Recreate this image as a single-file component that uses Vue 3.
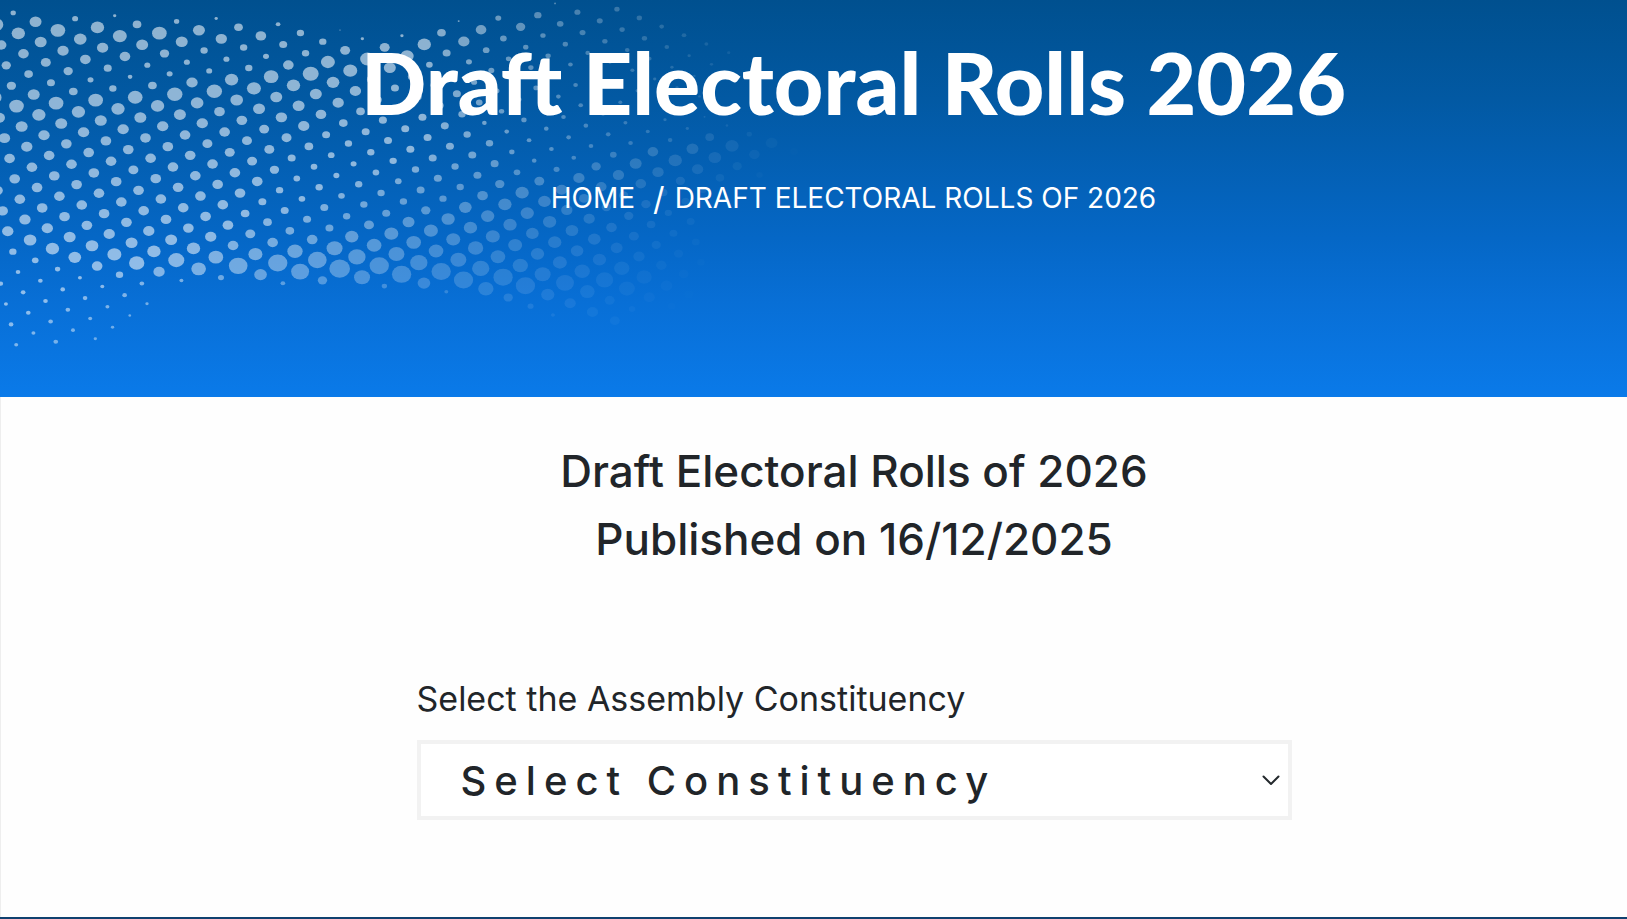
<script setup>
import { ref } from 'vue'

const constituency = ref('')

// Each entry: [row index, first column index, dot radii along the row]
const rows = [
  [-14, 30, [8, 8, 7, 7, 6, 5]],
  [-13, 27, [3, 9, 9, 8, 8, 7, 5, 5]],
  [-12, 26, [11, 10, 9, 8, 7, 6, 5, 4]],
  [-11, 24, [9, 14, 8, 8, 7, 7, 6, 5, 5, 4]],
  [-10, 22, [3, 16, 10, 8, 8, 7, 7, 7, 6, 4, 4, 3, 4, 8, 18, 12]],
  [-9, 21, [13, 17, 10, 8, 8, 7, 7, 6, 6, 6, 5, 5, 13, 20, 16]],
  [-8, 19, [5, 20, 12, 9, 9, 9, 8, 7, 7, 6, 6, 6, 7, 18, 19, 14, 10]],
  [-7, 16, [2, 5, 15, 20, 10, 9, 9, 9, 8, 7, 7, 7, 7, 7, 16, 20, 17, 13]],
  [-6, 13, [7, 11, 11, 15, 22, 18, 13, 12, 12, 10, 8, 8, 7, 7, 7, 10, 18, 17, 14, 12]],
  [-5, 10, [5, 13, 16, 12, 11, 21, 21, 17, 12, 13, 12, 11, 7, 7, 7, 7, 7, 14, 17, 16, 13, 12]],
  [-4, 8, [8, 18, 17, 11, 9, 16, 24, 19, 17, 12, 13, 12, 12, 11, 11, 8, 7, 9, 17, 16, 14, 14, 11, 12]],
  [-3, 5, [5, 13, 22, 18, 11, 9, 11, 22, 20, 18, 17, 13, 12, 12, 12, 12, 12, 12, 10, 15, 17, 15, 14, 14, 13, 12, 12]],
  [-2, 3, [9, 20, 21, 18, 14, 9, 9, 20, 21, 18, 18, 16, 13, 12, 12, 12, 12, 11, 12, 14, 20, 19, 17, 17, 16, 15, 14, 14, 12]],
  [-1, 0, [8, 18, 22, 19, 17, 16, 9, 9, 17, 23, 19, 18, 17, 17, 12, 11, 11, 11, 11, 12, 11, 16, 20, 20, 20, 19, 19, 18, 17, 16, 15]],
  [0, -1, [22, 20, 18, 17, 16, 12, 7, 13, 23, 19, 16, 16, 15, 15, 13, 10, 9, 10, 10, 12, 11, 19, 20, 20, 19, 20, 19, 20, 23, 23, 18, 15, 12]],
  [1, -1, [16, 16, 15, 14, 9, 11, 22, 20, 18, 17, 16, 15, 15, 12, 10, 9, 11, 11, 11, 14, 20, 20, 21, 21, 20, 21, 23, 26, 24, 17, 12]],
  [2, -1, [14, 13, 12, 13, 22, 20, 18, 17, 16, 15, 15, 15, 14, 10, 11, 10, 11, 12, 18, 21, 21, 23, 22, 23, 24, 27, 22, 15, 10]],
  [3, -1, [14, 18, 22, 20, 18, 17, 16, 16, 16, 16, 16, 16, 11, 10, 12, 11, 15, 21, 22, 22, 24, 26, 29, 29, 20, 17, 17, 15]],
  [4, -2, [22, 22, 20, 18, 17, 16, 16, 16, 16, 16, 16, 16, 12, 12, 12, 12, 20, 22, 24, 26, 29, 29, 23, 14, 9, 6]],
  [5, -2, [17, 18, 17, 16, 16, 16, 15, 16, 16, 16, 16, 13, 13, 13, 16, 24, 26, 29, 29, 19, 6]],
  [6, -2, [17, 17, 16, 16, 16, 16, 16, 16, 16, 16, 16, 15, 16, 23, 28, 31, 24, 8]],
  [7, -2, [16, 16, 16, 16, 16, 16, 16, 16, 16, 17, 16, 21, 29, 27, 14]],
  [8, -2, [16, 16, 16, 16, 16, 16, 17, 18, 20, 22, 28, 19, 7]],
  [9, -3, [16, 16, 16, 16, 16, 17, 18, 20, 24, 22, 9]],
  [10, -3, [16, 17, 17, 18, 19, 21, 23, 17, 6]],
  [11, -3, [17, 19, 20, 19, 16, 11, 7]],
  [12, -3, [11, 10, 8, 6, 6, 7, 5]],
  [13, -3, [7, 7, 7, 7, 6, 4]],
  [14, -4, [7, 7, 7, 7, 6, 5]],
  [15, -4, [6, 7, 7, 6, 5]],
  [16, -4, [7, 6, 7]],
  [17, -4, [6]],
]

// The wave of dots fades towards the right, earlier in its lower part
function fade(x, y) {
  const low = Math.max(0, y - 450)
  const start = 1260 - low * 2.5
  const end = 2440 - low * 0.7
  const t = Math.min(1, Math.max(0, (end - x) / (end - start)))
  return 0.58 * Math.pow(t, 1.3)
}

const dots = rows.flatMap(([j, first, radii]) =>
  radii.map((r, k) => {
    const i = first + k
    const x = 55 + 67.05 * i + 15.4 * j
    const y = 100 + 26.1 * i + 61.1 * j
    return { key: `${i},${j}`, x, y, rx: r, ry: r * 0.88, o: fade(x, y) }
  })
)
</script>

<template>
  <div class="page">
    <header class="banner">
      <svg class="dots" viewBox="0 0 2520 1191" aria-hidden="true">
        <ellipse
          v-for="d in dots"
          :key="d.key"
          :cx="d.x"
          :cy="d.y"
          :rx="d.rx"
          :ry="d.ry"
          :fill-opacity="d.o"
          fill="#f4f8fb"
        />
      </svg>
      <h1 class="title">Draft Electoral Rolls 2026</h1>
      <nav class="crumbs" aria-label="Breadcrumb">
        <a href="#">HOME</a>
        <span class="slash">/</span>
        <span>DRAFT ELECTORAL ROLLS OF 2026</span>
      </nav>
    </header>

    <main class="content">
      <h2 class="heading">Draft Electoral Rolls of 2026<br />Published on 16/12/2025</h2>
      <form class="form">
        <label class="label" for="constituency">Select the Assembly Constituency</label>
        <div class="field">
          <select id="constituency" v-model="constituency" class="select">
            <option value="">Select Constituency</option>
          </select>
          <svg class="chevron" viewBox="0 0 18 11" aria-hidden="true">
            <path d="M1.500 1.500 9 9l7.500-7.500" fill="none" stroke="#24292d" stroke-width="2" stroke-linecap="round" stroke-linejoin="round" />
          </svg>
        </div>
      </form>
    </main>

    <footer class="footer"></footer>
  </div>
</template>

<style>
body {
  background: #fefefe;
}
</style>

<style scoped>
.page {
  display: flex;
  flex-direction: column;
  min-height: 100vh;
  color: #212529;
  font-family: Inter, "Liberation Sans", sans-serif;
}

.banner {
  position: relative;
  overflow: hidden;
  box-sizing: border-box;
  padding: 34px 0 178px 80px;
  background: linear-gradient(#00508f 0%, #0259a3 25%, #0567c6 60%, #086fd6 76%, #0a7ae9 100%);
  color: #fff;
  text-align: center;
}

.dots {
  position: absolute;
  top: 0;
  left: 0;
  width: 840px;
  height: 397px;
}

.title {
  position: relative;
  margin: 0;
  font-family: Lato, sans-serif;
  font-size: 86px;
  font-weight: 900;
  line-height: 96px;
}

.crumbs {
  position: relative;
  display: flex;
  justify-content: center;
  align-items: center;
  margin-top: 48px;
  font-size: 28px;
  line-height: 41px;
}

.crumbs a {
  color: inherit;
  text-decoration: none;
}

.slash {
  margin: 0 10px 0 18px;
  font-size: 32px;
}

.content {
  flex: 1;
  border-left: 1px solid #eee;
  padding: 40px 0 94px 80px;
}

.heading {
  margin: 0;
  font-size: 44px;
  font-weight: 500;
  line-height: 68px;
  text-align: center;
}

.form {
  width: 875px;
  max-width: 100%;
  margin: 104px auto 0;
}

.label {
  display: block;
  font-size: 34px;
  line-height: 44px;
}

.field {
  position: relative;
  margin-top: 19px;
}

.select {
  display: block;
  box-sizing: border-box;
  width: 100%;
  height: 80px;
  padding: 0 48px 0 40px;
  border: 4px solid #f2f2f2;
  border-radius: 0;
  background: #fff;
  color: inherit;
  font-family: inherit;
  font-size: 40px;
  font-weight: 500;
  letter-spacing: 8px;
  appearance: none;
}

.chevron {
  position: absolute;
  top: 35px;
  right: 12px;
  width: 18px;
  height: 11px;
  pointer-events: none;
}

.footer {
  height: 2px;
  background: #0f416f;
}
</style>
